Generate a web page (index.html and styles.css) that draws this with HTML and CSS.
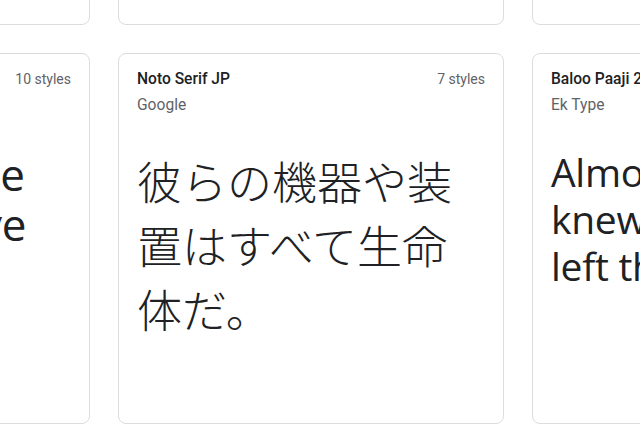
FILE: index.html
```html
<!DOCTYPE html>
<html lang="en">
<head>
<meta charset="utf-8">
<title>Fonts</title>
<link rel="stylesheet" href="styles.css">
</head>
<body>
<main class="grid">
  <article class="card"></article>
  <article class="card"></article>
  <article class="card"></article>

  <article class="card">
    <header class="card-head">
      <div class="row"><span class="name">Open Sans</span><span class="styles">10 styles</span></div>
      <div class="foundry">Steve Matteson</div>
    </header>
    <p class="sample sample-latin">Whereas there<br>we surely have</p>
  </article>

  <article class="card">
    <header class="card-head">
      <div class="row"><span class="name">Noto Serif JP</span><span class="styles">7 styles</span></div>
      <div class="foundry">Google</div>
    </header>
    <p class="sample sample-jp" lang="ja">彼らの機器や装置はすべて生命体だ。</p>
  </article>

  <article class="card">
    <header class="card-head">
      <div class="row"><span class="name">Baloo Paaji 2</span><span class="styles">5 styles</span></div>
      <div class="foundry">Ek Type</div>
    </header>
    <p class="sample sample-baloo">Almost before we<br>knew it, we had<br>left the ground.</p>
  </article>
</main>
</body>
</html>
```
FILE: styles.css
```css
html, body {
  margin: 0;
  padding: 0;
  background: #ffffff;
  overflow: hidden;
  width: 640px;
  height: 426px;
}

.grid {
  display: grid;
  grid-template-columns: repeat(3, 386px);
  grid-auto-rows: 371px;
  gap: 28px;
  margin: -346px 0 0 -296px;
  width: 1214px;
}

.card {
  box-sizing: border-box;
  border: 1px solid #dadce0;
  border-radius: 8px;
  padding: 15px 18px;
  overflow: hidden;
  font-family: Roboto, "Liberation Sans", sans-serif;
}

.card-head .row {
  display: flex;
  justify-content: space-between;
  align-items: baseline;
  line-height: 20px;
}

.name {
  font-size: 15.6px;
  font-weight: 500;
  color: #202124;
}

.styles {
  font-size: 14px;
  color: #5f6368;
}

.foundry {
  margin-top: 6px;
  font-size: 15.6px;
  line-height: 20px;
  color: #5f6368;
}

.sample {
  margin: 34px 0 0;
  color: #202124;
}

.sample-jp {
  font-family: "Noto Sans CJK JP", sans-serif;
  font-weight: 300;
  font-size: 45px;
  line-height: 64px;
}

.sample-latin {
  font-family: "Open Sans", sans-serif;
  font-size: 44px;
  line-height: 50px;
  white-space: nowrap;
  margin-top: 34px;
}

.sample-baloo {
  font-family: "Open Sans", sans-serif;
  font-size: 39px;
  line-height: 47px;
  letter-spacing: -0.3px;
  white-space: nowrap;
  margin-top: 33px;
}
```
